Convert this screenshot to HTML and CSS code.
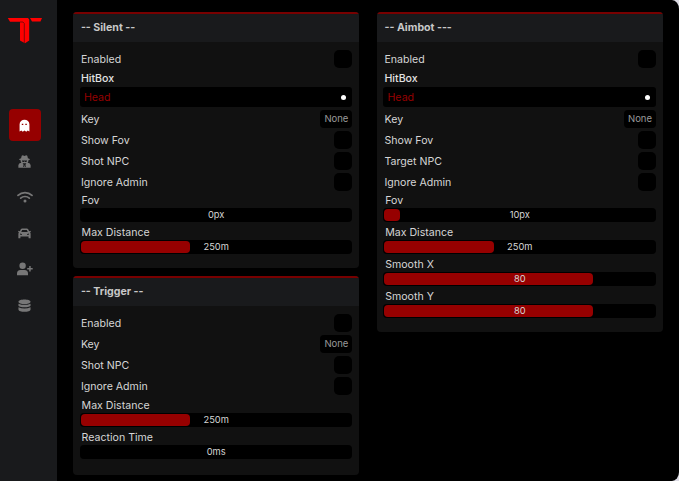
FILE: index.html
```html
<!DOCTYPE html>
<html lang="en">
<head>
<meta charset="utf-8">
<title>Menu</title>
<link rel="stylesheet" href="styles.css">
</head>
<body>
<div class="window">
  <nav class="sidebar">
    <svg class="logo" viewBox="0 0 36 28"><path d="M.8 1H21L22.200 2.500V23.500L18 26.200 13 23.500V4.800H3Z"/><path d="M23 1H35L33.500 4.500H25Z"/><path class="cut" d="M13 5H16L17.300 6.500V26"/></svg>
    <a class="tab active"><svg viewBox="0 0 12 14"><path fill-rule="evenodd" d="M.7 13.400V6a5.300 5.300 0 0 1 10.600 0v7.400l-1.900-1-1.500 1.300L6 12.500l-1.900 1.200-1.500-1.300ZM3.100 5v1.500h1.600V5Zm3.800 0v1.500h1.600V5Z"/></svg></a>
    <a class="tab"><svg viewBox="0 0 14 14"><path fill-rule="evenodd" d="M4 .8 5.200.2 7 1 8.800.2 10 .8l.7 2.700 2 .7v.9l-1.500.5v1.200l-.8 1.500 2 .5 1.200 2V13.800H.4V10.800l1.200-2 2-.5-.8-1.500V5.600L1.300 5.100v-.9l2-.7ZM4.300 5.800v1l1 .7h1l.7-.7.7.7h1l1-.7v-1ZM5 9l1 1.400L5.600 13h.9L7 10.500l.5 2.500h.9L8 10.400 9 9Z"/></svg></a>
    <a class="tab"><svg class="wide line" viewBox="0 0 16 12"><path d="M1 4.400a10.200 10.200 0 0 1 14 0M3.700 7.200a6.300 6.300 0 0 1 8.600 0"/><circle cx="8" cy="10" r="1.500"/></svg></a>
    <a class="tab"><svg viewBox="0 0 14 12"><path fill-rule="evenodd" d="M1 5 0 3.800.8 3 2 3.500 3 1.300Q3.500.5 4.500.5h5Q10.500.5 11 1.300l1 2.200 1.200-.5.8.8L13 5l.6 1v5h-2.200V9.300H2.600V11H.4V6ZM3.500 4.500h7L9.500 2.200h-5ZM2.300 6v1.400l2 .2L4 6.500Zm9.400 0L10 6.500l-.3 1.100 2-.2Z"/></svg></a>
    <a class="tab"><svg class="wide" viewBox="0 0 16 14"><circle cx="5.600" cy="3.700" r="3.200"/><path d="M0 13.200v-1.700Q0 8 3.500 8h4Q11 8 11 11.500v1.700ZM12.200 4h1.500v2h2v1.500h-2v2h-1.500v-2h-2V6h2Z"/></svg></a>
    <a class="tab"><svg viewBox="0 0 14 14"><path d="M.5 3C.5-.3 13.500-.3 13.500 3S.5 6.300.5 3ZM.5 5q6.500 2.600 13 0v2c0 2.600-13 2.600-13 0ZM.5 9q6.500 2.600 13 0v2.200c0 3.400-13 3.400-13 0Z"/></svg></a>
  </nav>
  <main class="content">
    <div class="column">
      <section class="panel silent">
        <h2>-- Silent --</h2>
        <div class="body">
          <div class="row">Enabled<i class="check"></i></div>
          <div class="label hitbox">HitBox</div>
          <div class="select">Head<i></i></div>
          <div class="row">Key<span class="key">None</span></div>
          <div class="row">Show Fov<i class="check"></i></div>
          <div class="row">Shot NPC<i class="check"></i></div>
          <div class="row">Ignore Admin<i class="check"></i></div>
          <div class="label first">Fov</div>
          <div class="slider"><span>0px</span></div>
          <div class="label">Max Distance</div>
          <div class="slider"><b style="width:40.4%"></b><span>250m</span></div>
        </div>
      </section>
      <section class="panel trigger">
        <h2>-- Trigger --</h2>
        <div class="body">
          <div class="row">Enabled<i class="check"></i></div>
          <div class="row">Key<span class="key">None</span></div>
          <div class="row">Shot NPC<i class="check"></i></div>
          <div class="row">Ignore Admin<i class="check"></i></div>
          <div class="label">Max Distance</div>
          <div class="slider"><b style="width:40.4%"></b><span>250m</span></div>
          <div class="label">Reaction Time</div>
          <div class="slider"><span>0ms</span></div>
        </div>
      </section>
    </div>
    <div class="column">
      <section class="panel">
        <h2>-- Aimbot ---</h2>
        <div class="body">
          <div class="row">Enabled<i class="check"></i></div>
          <div class="label hitbox">HitBox</div>
          <div class="select">Head<i></i></div>
          <div class="row">Key<span class="key">None</span></div>
          <div class="row">Show Fov<i class="check"></i></div>
          <div class="row">Target NPC<i class="check"></i></div>
          <div class="row">Ignore Admin<i class="check"></i></div>
          <div class="label first">Fov</div>
          <div class="slider"><b style="width:5.8%"></b><span>10px</span></div>
          <div class="label">Max Distance</div>
          <div class="slider"><b style="width:40.4%"></b><span>250m</span></div>
          <div class="label">Smooth X</div>
          <div class="slider"><b style="width:77.2%"></b><span>80</span></div>
          <div class="label">Smooth Y</div>
          <div class="slider"><b style="width:77.2%"></b><span>80</span></div>
        </div>
      </section>
    </div>
  </main>
</div>
</body>
</html>
```
FILE: styles.css
```css
* { box-sizing: border-box; }
body {
  margin: 0;
  background: #dcdbe4;
  font: 10.6px/20px Inter, "Liberation Sans", sans-serif;
  color: #d6d6d6;
}
.window {
  display: flex;
  width: 679px;
  height: 481px;
  overflow: hidden;
  background: #000;
  border-radius: 0 7px 7px 0 / 0 9px 9px 0;
}
.sidebar {
  display: flex;
  flex-direction: column;
  align-items: center;
  width: 57px;
  padding: 17px 7px 0 0;
  background: #191a1c;
}
.logo { width: 36px; height: 28px; margin-bottom: 64px; fill: #f00; }
.logo .cut { fill: none; stroke: #68090a; stroke-width: .8; }
.tab {
  display: flex;
  flex: none;
  align-items: center;
  justify-content: center;
  width: 32px;
  height: 32px;
  margin-bottom: 4px;
  padding-right: 1px;
  border-radius: 4px;
}
.tab svg { width: 13px; height: 13px; fill: #777; }
.tab .wide { width: 16px; height: 14px; }
.line path { fill: none; stroke: #777; stroke-width: 1.7; stroke-linecap: round; }
.tab.active { background: #960000; }
.tab.active svg { fill: #fff; }
.content {
  display: flex;
  align-items: flex-start;
  gap: 17.6px;
  padding: 12px 0 0 16.4px;
}
.column { display: grid; gap: 8px; width: 286px; }
.panel {
  overflow: hidden;
  background: #111;
  border-radius: 4px;
}
h2 {
  height: 30px;
  margin: 0;
  padding: 0 7.5px;
  border-top: 2px solid #780000;
  background: #191a1c;
  font-size: 10.6px;
  line-height: 28px;
  font-weight: 700;
  color: #c8c8c8;
}
.body { padding: 8px 7px 14px 6.5px; }
.trigger .body { padding-bottom: 16px; }
.row {
  display: flex;
  justify-content: space-between;
  height: 18px;
  margin-bottom: 3px;
  padding-left: 1px;
}
.row:has(+ .label) { margin-bottom: 0; }
.check { width: 18px; background: #000; border-radius: 5px; }
.key {
  width: 32px;
  background: #000;
  border-radius: 4px;
  font-size: 9.5px;
  line-height: 18px;
  text-align: center;
  color: #999;
}
.label { height: 18px; padding: 1px 0 0 1.7px; }
.label.hitbox { height: 19px; padding-left: 1px; color: #e2e2e2; font-weight: 500; }
.label.first { height: 17px; padding-top: 0; }
.select {
  display: flex;
  align-items: center;
  justify-content: space-between;
  height: 20px;
  margin-bottom: 3px;
  padding: 0 6px 0 4px;
  background: #000;
  border-radius: 3px;
  color: #960000;
  line-height: 21px;
}
.select i { width: 5px; height: 5px; border-radius: 50%; background: #fff; }
.slider {
  display: grid;
  height: 14px;
  padding: 1px;
  background: #000;
  border-radius: 4px;
  font-size: 9.3px;
  line-height: 12px;
  text-align: center;
}
.slider > * { grid-area: 1 / 1; }
.slider b { height: 12px; background: #960000; border-radius: 4px; }
```
